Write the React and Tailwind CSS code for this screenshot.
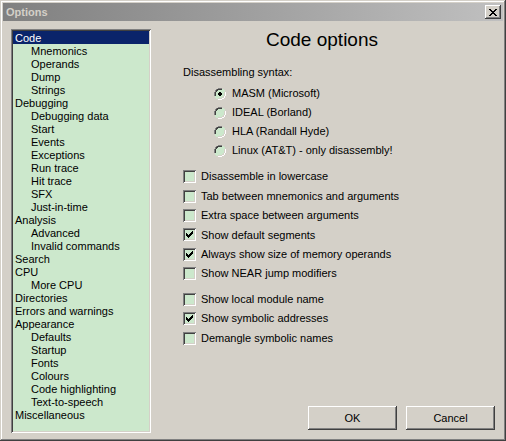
import React from "react";

const tree = [
  ["Code", 0, true],
  ["Mnemonics", 1],
  ["Operands", 1],
  ["Dump", 1],
  ["Strings", 1],
  ["Debugging", 0],
  ["Debugging data", 1],
  ["Start", 1],
  ["Events", 1],
  ["Exceptions", 1],
  ["Run trace", 1],
  ["Hit trace", 1],
  ["SFX", 1],
  ["Just-in-time", 1],
  ["Analysis", 0],
  ["Advanced", 1],
  ["Invalid commands", 1],
  ["Search", 0],
  ["CPU", 0],
  ["More CPU", 1],
  ["Directories", 0],
  ["Errors and warnings", 0],
  ["Appearance", 0],
  ["Defaults", 1],
  ["Startup", 1],
  ["Fonts", 1],
  ["Colours", 1],
  ["Code highlighting", 1],
  ["Text-to-speech", 1],
  ["Miscellaneous", 0],
];

const radios = [
  ["MASM (Microsoft)", true],
  ["IDEAL (Borland)", false],
  ["HLA (Randall Hyde)", false],
  ["Linux (AT&T) - only disassembly!", false],
];

const checks1 = [
  ["Disassemble in lowercase", false],
  ["Tab between mnemonics and arguments", false],
  ["Extra space between arguments", false],
  ["Show default segments", true],
  ["Always show size of memory operands", true],
  ["Show NEAR jump modifiers", false],
];

const checks2 = [
  ["Show local module name", false],
  ["Show symbolic addresses", true],
  ["Demangle symbolic names", false],
];

const Radio = ({ on }) => (
  <svg width="12" height="12" viewBox="0 0 12 12" className="shrink-0">
    <path d="M4 0h4v1h2v1h1v2h1v4h-1v2h-1v1h-2v1h-4v-1h-2v-1h-1v-2h-1v-4h1v-2h1v-1h2z" fill="#cce8cc" />
    <path d="M4 0h4v1h-4v1h-2v2h-1v4h-1v-4h1v-2h1v-1h2z" fill="#808080" />
    <path d="M4 1h4v1h-4v1h-1v1h-1v4h-1v-4h1v-2h1v-1z" fill="#404040" />
    <path d="M11 4h1v4h-1v2h-1v1h-2v1h-4v-1h4v-1h2v-2h1z" fill="#ffffff" />
    <path d="M10 4h1v4h-1v2h-2v1h-4v-1h4v-1h1v-1h1z" fill="#d4d0c8" />
    {on && <path d="M5 4h2v1h1v2h-1v1h-2v-1h-1v-2h1z" fill="#000" />}
  </svg>
);

const Check = ({ on }) => (
  <div className="w-[13px] h-[13px] shrink-0 bg-[#cce8cc] shadow-[inset_1px_1px_#808080,inset_-1px_-1px_#fff,inset_2px_2px_#404040,inset_-2px_-2px_#d4d0c8] relative">
    {on && (
      <svg width="13" height="13" viewBox="0 0 13 13" className="absolute inset-0">
        <path d="M3 5h1v1h1v1h1v-1h1v-1h1v-1h1v-1h1v3h-1v1h-1v1h-1v1h-1v1h-1v-1h-1v-1h-1z" fill="#000" />
      </svg>
    )}
  </div>
);

const btn =
  "w-[89px] h-[24px] bg-[#d4d0c8] text-[11px] text-black flex items-center justify-center shadow-[inset_-1px_-1px_#404040,inset_1px_1px_#fff,inset_-2px_-2px_#808080,inset_2px_2px_#d4d0c8]";

export default function App() {
  return (
    <div className="w-[506px] h-[441px] bg-[#d4d0c8] flex flex-col p-[3px] font-['Liberation_Sans',Arial,sans-serif] shadow-[inset_-1px_-1px_#404040,inset_1px_1px_#d4d0c8,inset_-2px_-2px_#808080,inset_2px_2px_#fff] overflow-hidden">
      <div className="h-[18px] shrink-0 flex items-center justify-between bg-gradient-to-r from-[#808080] to-[#c0c0c0] pl-[3px] pr-[2px]">
        <span className="text-[11px] font-bold text-[#d4d0c8]">Options</span>
        <div className="w-[16px] h-[14px] bg-[#d4d0c8] flex items-center justify-center shadow-[inset_-1px_-1px_#404040,inset_1px_1px_#fff,inset_-2px_-2px_#808080,inset_2px_2px_#d4d0c8]">
          <svg width="8" height="7" viewBox="0 0 8 7">
            <path d="M0 0h2v1h1v1h2v-1h1v-1h2v1h-1v1h-1v1h-1v1h1v1h1v1h1v1h-2v-1h-1v-1h-2v1h-1v1h-2v-1h1v-1h1v-1h1v-1h-1v-1h-1v-1h-1z" fill="#000" />
          </svg>
        </div>
      </div>
      <div className="flex flex-1">
        <div className="ml-[8px] mt-[8px] w-[140px] h-[404px] bg-[#cce8cc] p-[2px] shadow-[inset_1px_1px_#808080,inset_-1px_-1px_#fff,inset_2px_2px_#404040,inset_-2px_-2px_#d4d0c8]">
          {tree.map(([label, lvl, sel]) => (
            <div
              key={label}
              className={
                "h-[13px] leading-[14px] text-[11px] whitespace-nowrap " +
                (lvl ? "pl-[18px] " : "pl-[2px] ") +
                (sel ? "bg-[#0a246a] text-white" : "text-black")
              }
            >
              {label}
            </div>
          ))}
        </div>
        <div className="flex-1 flex flex-col text-[11px] text-black">
          <div className="mt-[8px] h-[22px] leading-[22px] text-[19px] text-center pr-[10px]">Code options</div>
          <div className="mt-[14px] ml-[32px] h-[14px] leading-[14px]">Disassembling syntax:</div>
          <div className="mt-[5px] ml-[63px] flex flex-col">
            {radios.map(([label, on]) => (
              <div key={label} className="h-[19px] flex items-center gap-[6px]">
                <Radio on={on} />
                <span>{label}</span>
              </div>
            ))}
          </div>
          <div className="mt-[7px] ml-[32px] flex flex-col">
            {checks1.map(([label, on]) => (
              <div key={label} className="h-[19.4px] flex items-center gap-[5px]">
                <Check on={on} />
                <span>{label}</span>
              </div>
            ))}
          </div>
          <div className="mt-[6px] ml-[32px] flex flex-col">
            {checks2.map(([label, on]) => (
              <div key={label} className="h-[19.5px] flex items-center gap-[5px]">
                <Check on={on} />
                <span>{label}</span>
              </div>
            ))}
          </div>
          <div className="mt-auto mb-[8px] mr-[8px] flex justify-end gap-[9px]">
            <div className={btn}>OK</div>
            <div className={btn}>Cancel</div>
          </div>
        </div>
      </div>
    </div>
  );
}
